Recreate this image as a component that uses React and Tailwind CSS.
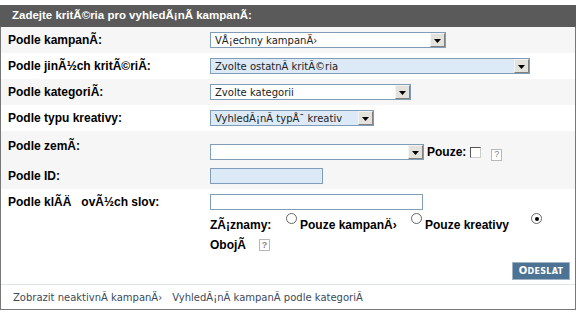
import React from 'react';

const Arrow = () => (
  <div className="w-[15px] h-[14px] bg-[#e4e2dc] border border-t-[#f4f4f4] border-l-[#f4f4f4] border-r-[#808080] border-b-[#808080] flex items-center justify-center shrink-0">
    <svg width="7" height="5" viewBox="0 0 7 5">
      <path d="M0 1h7L3.5 5z" fill="#000" />
    </svg>
  </div>
);

const Select = ({ width, text, blue }) => (
  <div
    className={`h-[16px] border border-[#7f9db9] flex items-center justify-between ${blue ? 'bg-[#dceaf8]' : 'bg-white'} ${width}`}
  >
    <span className="pl-[4px] text-[10px] text-[#222] whitespace-nowrap overflow-hidden font-['DejaVu_Sans',sans-serif]">
      {text}
    </span>
    <Arrow />
  </div>
);

const Help = () => (
  <span className="inline-flex w-[11px] h-[12px] border border-[#b8b8b8] bg-white items-center justify-center text-[9px] text-[#888] font-['Liberation_Sans',sans-serif] leading-none">
    ?
  </span>
);

const Radio = ({ checked }) => (
  <span className="inline-flex w-[11px] h-[11px] rounded-full border border-[#666] bg-white items-center justify-center self-start mt-[-2px]">
    {checked && <span className="w-[4px] h-[4px] rounded-full bg-black" />}
  </span>
);

const Row = ({ label, children, bg, h, top }) => (
  <div className={`flex ${top ? 'items-start' : 'items-center'} ${bg ? 'bg-[#f6f6f6]' : 'bg-white'} ${h}`}>
    <div className={`w-[209px] pl-[7px] font-bold text-[12px] text-black shrink-0 ${top ? 'pt-[6px]' : ''}`}>
      {label}
    </div>
    {children}
  </div>
);

export default function App() {
  return (
    <div className="pt-[5px] font-['Liberation_Sans',Arial,sans-serif]">
      <div className="w-[576px] bg-[#5a5a5a] h-[22px] flex items-center pl-[12px] text-white font-bold text-[11.5px]">
        Zadejte kritÃ©ria pro vyhledÃ¡nÃ­ kampanÃ­:
      </div>
      <div className="w-[576px] border-l border-r border-b border-[#777] bg-white">
        <Row label="Podle kampanÃ­:" bg h="h-[26px]">
          <Select width="w-[236px]" text="VÅ¡echny kampanÄ›" />
        </Row>
        <Row label="Podle jinÃ½ch kritÃ©riÃ­:" h="h-[26px]">
          <Select width="w-[320px]" text="Zvolte ostatnÃ­ kritÃ©ria" blue />
        </Row>
        <Row label="Podle kategoriÃ­:" bg h="h-[26px]">
          <Select width="w-[201px]" text="Zvolte kategorii" />
        </Row>
        <Row label="Podle typu kreativy:" h="h-[26px]">
          <Select width="w-[164px]" text="VyhledÃ¡nÃ­ typÅ¯ kreativ" blue />
        </Row>
        <Row label="Podle zemÃ­:" bg h="h-[32px]" top>
          <div className="flex items-center pt-[9px]">
            <Select width="w-[214px]" text="" />
            <span className="ml-[3px] font-bold text-[12px]">Pouze:</span>
            <span className="ml-[4px] w-[11px] h-[11px] border border-t-[#555] border-l-[#555] border-r-[#ccc] border-b-[#ccc] bg-white" />
            <span className="ml-[10px]"><Help /></span>
          </div>
        </Row>
        <Row label="Podle ID:" bg h="h-[26px]">
          <div className="w-[113px] h-[16px] border border-[#7f9db9] bg-[#dceaf8]" />
        </Row>
        <div className="bg-white pb-[2px]">
          <div className="flex items-center h-[26px]">
            <div className="w-[209px] pl-[7px] font-bold text-[12px] shrink-0">
              Podle klÃ­Ä&#x8D;ovÃ½ch slov:
            </div>
            <div className="w-[213px] h-[16px] border border-[#7f9db9] bg-white" />
          </div>
          <div className="pl-[209px] font-bold text-[12px] leading-[20px] flex flex-wrap items-center">
            <span className="w-[76px]">ZÃ¡znamy:</span>
            <Radio />
            <span className="ml-[3px] w-[111px]">Pouze kampanÄ›</span>
            <Radio />
            <span className="ml-[3px] w-[106px]">Pouze kreativy</span>
            <Radio checked />
          </div>
          <div className="pl-[209px] font-bold text-[12px] leading-[20px] flex items-center">
            <span className="w-[49px]">ObojÃ­</span>
            <Help />
          </div>
        </div>
        <div className="h-[28px] flex items-center justify-end pr-[5px] border-b border-[#dde3e8]">
          <button className="w-[58px] h-[18px] bg-[#4c7394] border border-[#9fb3c4] text-white font-bold text-[10px] tracking-[0.3px] font-['DejaVu_Sans',sans-serif]">
            O<span className="text-[8px]">DESLAT</span>
          </button>
        </div>
        <div className="h-[24px] flex items-center pl-[12px] gap-[10px] text-[10px] text-[#3a4a5a] whitespace-nowrap font-['DejaVu_Sans',sans-serif]">
          <span>Zobrazit neaktivnÃ­ kampanÄ›</span>
          <span>VyhledÃ¡nÃ­ kampanÃ­ podle kategoriÃ­</span>
        </div>
      </div>
    </div>
  );
}
